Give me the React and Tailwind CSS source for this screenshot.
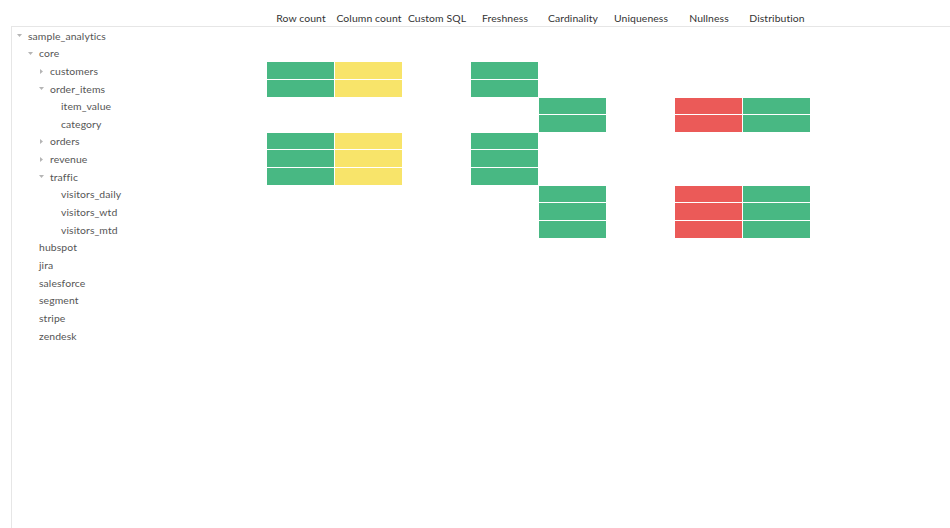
import React from "react";

const COLUMNS = [
  "Row count",
  "Column count",
  "Custom SQL",
  "Freshness",
  "Cardinality",
  "Uniqueness",
  "Nullness",
  "Distribution",
];

const G = "bg-[#48b883]";
const Y = "bg-[#f8e46a]";
const R = "bg-[#eb5a58]";

const tableChecks = [G, Y, null, G, null, null, null, null];
const columnChecks = [null, null, null, null, G, null, R, G];

const rows = [
  { label: "sample_analytics", level: 0, caret: "open" },
  { label: "core", level: 1, caret: "open" },
  { label: "customers", level: 2, caret: "closed", checks: tableChecks },
  { label: "order_items", level: 2, caret: "open", checks: tableChecks },
  { label: "item_value", level: 3, checks: columnChecks },
  { label: "category", level: 3, checks: columnChecks },
  { label: "orders", level: 2, caret: "closed", checks: tableChecks },
  { label: "revenue", level: 2, caret: "closed", checks: tableChecks },
  { label: "traffic", level: 2, caret: "open", checks: tableChecks },
  { label: "visitors_daily", level: 3, checks: columnChecks },
  { label: "visitors_wtd", level: 3, checks: columnChecks },
  { label: "visitors_mtd", level: 3, checks: columnChecks },
  { label: "hubspot", level: 1 },
  { label: "jira", level: 1 },
  { label: "salesforce", level: 1 },
  { label: "segment", level: 1 },
  { label: "stripe", level: 1 },
  { label: "zendesk", level: 1 },
];

const indent = ["pl-[5px]", "pl-[16px]", "pl-[27px]", "pl-[38px]"];

const Caret = ({ type }) => {
  if (!type) return null;
  return type === "open" ? (
    <svg width="5" height="3" viewBox="0 0 5 3">
      <path d="M0 0 L5 0 L2.5 3 Z" fill="#b5b5b5" />
    </svg>
  ) : (
    <svg width="3" height="5" viewBox="0 0 3 5" className="ml-px">
      <path d="M0 0 L3 2.5 L0 5 Z" fill="#b5b5b5" />
    </svg>
  );
};

const TreeRow = ({ row }) => (
  <div className="flex h-[17.65px]">
    <div className={`w-[255px] flex items-center ${indent[row.level]}`}>
      <span className="w-[11px] flex items-center">
        <Caret type={row.caret} />
      </span>
      <span className="text-[#555] leading-none">{row.label}</span>
    </div>
    {COLUMNS.map((c, i) => {
      const color = row.checks ? row.checks[i] : null;
      return (
        <div key={c} className="w-[68px] h-full pr-px pb-px">
          {color && <div className={`w-full h-full ${color}`} />}
        </div>
      );
    })}
  </div>
);

export default function App() {
  return (
    <div
      className="w-[950px] h-[528px] bg-white overflow-hidden text-[10.4px] tracking-[0.1px]"
      style={{ fontFamily: 'Lato, "Noto Sans", sans-serif' }}
    >
      <div className="flex h-[26px] items-end pl-[267px] pb-px">
        {COLUMNS.map((c) => (
          <div key={c} className="w-[68px] text-center text-[#333] leading-[14px] whitespace-nowrap">
            {c}
          </div>
        ))}
      </div>
      <div className="ml-[11px] border-l border-t border-[#e6e6e6] h-[502px]">
        {rows.map((r) => (
          <TreeRow key={r.label} row={r} />
        ))}
      </div>
    </div>
  );
}
